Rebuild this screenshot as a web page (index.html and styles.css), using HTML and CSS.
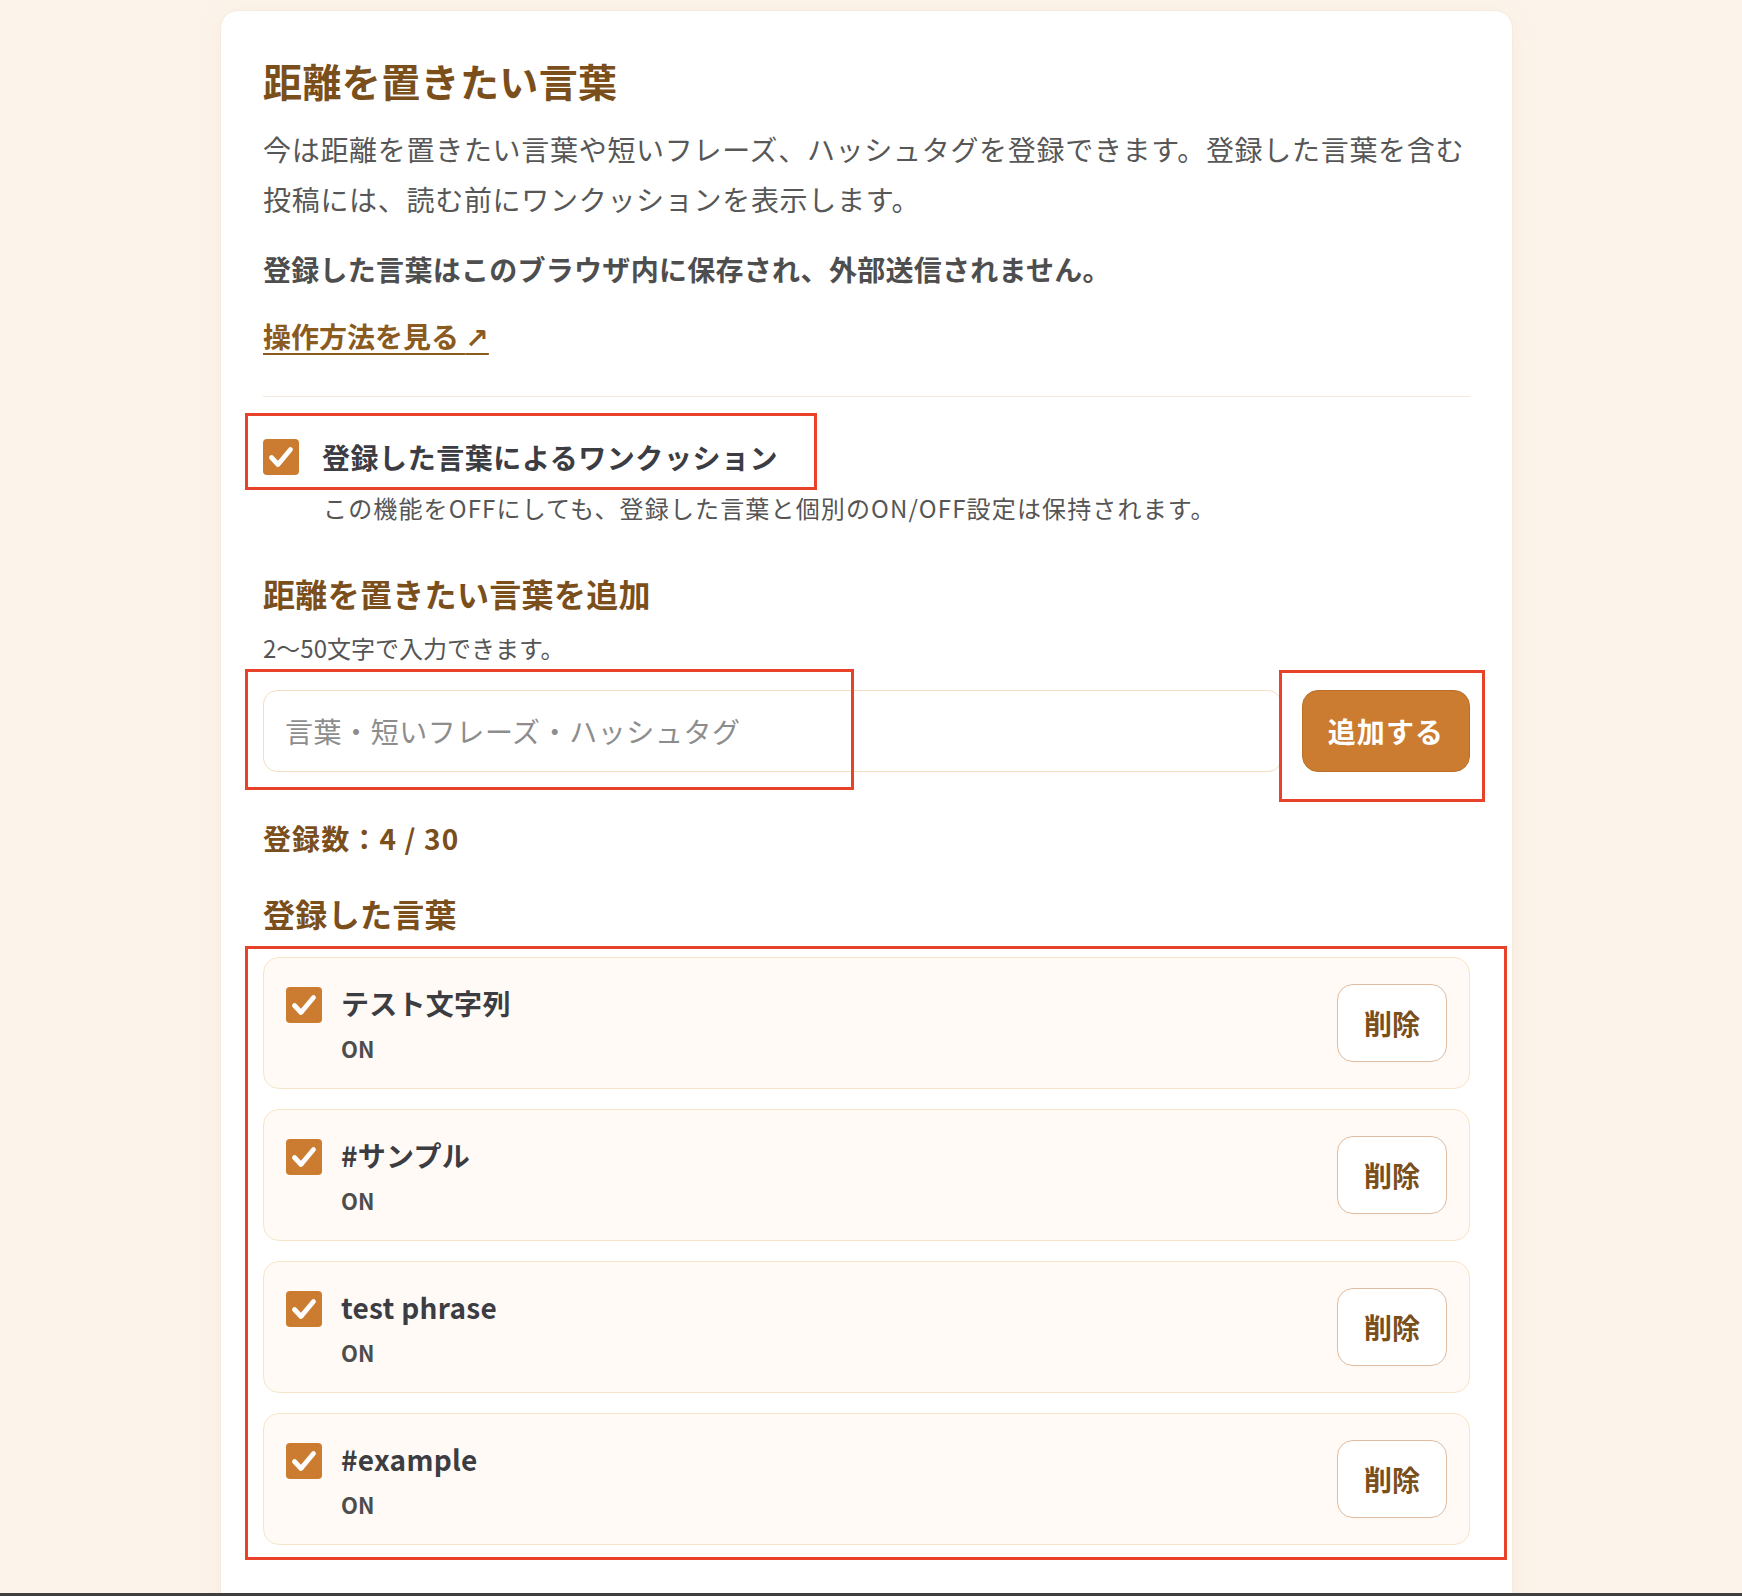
FILE: index.html
```html
<!DOCTYPE html>
<html lang="ja">
<head>
<meta charset="utf-8">
<title>距離を置きたい言葉</title>
<link rel="stylesheet" href="styles.css">
</head>
<body>
<main class="card">
  <h1 class="title">距離を置きたい言葉</h1>
  <p class="desc">今は距離を置きたい言葉や短いフレーズ、ハッシュタグを登録できます。登録した言葉を含む投稿には、読む前にワンクッションを表示します。</p>
  <p class="note">登録した言葉はこのブラウザ内に保存され、外部送信されません。</p>
  <p class="howto"><a class="link" href="#">操作方法を見る <span class="arrow">↗</span></a></p>
  <div class="divider"></div>

  <label class="toggle">
    <span class="check big"><svg viewBox="0 0 36 36"><path d="M8.5 18.5 L15 25.5 L27.5 10.5"/></svg></span>
    <span class="toggle-label">登録した言葉によるワンクッション</span>
  </label>
  <p class="toggle-sub">この機能をOFFにしても、登録した言葉と個別のON/OFF設定は保持されます。</p>

  <h2 class="section">距離を置きたい言葉を追加</h2>
  <p class="hint">2〜50文字で入力できます。</p>
  <div class="add-row">
    <input class="word-input" type="text" placeholder="言葉・短いフレーズ・ハッシュタグ">
    <button class="add-btn" type="button">追加する</button>
  </div>

  <p class="count">登録数：4 / 30</p>

  <h2 class="section list-title">登録した言葉</h2>
  <ul class="words">
    <li class="word">
      <div class="word-main">
        <span class="check"><svg viewBox="0 0 36 36"><path d="M8.5 18.5 L15 25.5 L27.5 10.5"/></svg></span>
        <div class="word-text">
          <span class="word-name">テスト文字列</span>
          <span class="word-state">ON</span>
        </div>
      </div>
      <button class="del-btn" type="button">削除</button>
    </li>
    <li class="word">
      <div class="word-main">
        <span class="check"><svg viewBox="0 0 36 36"><path d="M8.5 18.5 L15 25.5 L27.5 10.5"/></svg></span>
        <div class="word-text">
          <span class="word-name">#サンプル</span>
          <span class="word-state">ON</span>
        </div>
      </div>
      <button class="del-btn" type="button">削除</button>
    </li>
    <li class="word">
      <div class="word-main">
        <span class="check"><svg viewBox="0 0 36 36"><path d="M8.5 18.5 L15 25.5 L27.5 10.5"/></svg></span>
        <div class="word-text">
          <span class="word-name">test phrase</span>
          <span class="word-state">ON</span>
        </div>
      </div>
      <button class="del-btn" type="button">削除</button>
    </li>
    <li class="word">
      <div class="word-main">
        <span class="check"><svg viewBox="0 0 36 36"><path d="M8.5 18.5 L15 25.5 L27.5 10.5"/></svg></span>
        <div class="word-text">
          <span class="word-name">#example</span>
          <span class="word-state">ON</span>
        </div>
      </div>
      <button class="del-btn" type="button">削除</button>
    </li>
  </ul>
</main>

<div class="mark mark-toggle"></div>
<div class="mark mark-input"></div>
<div class="mark mark-button"></div>
<div class="mark mark-list"></div>
<div class="window-edge"></div>
</body>
</html>
```

FILE: styles.css
```css
* { box-sizing: border-box; }

html, body {
  margin: 0;
  padding: 0;
}

body {
  background: #fcf4eb;
  font-family: "Noto Sans CJK JP", "Noto Sans", sans-serif;
  color: #555555;
  padding: 10px 9px 0 0;
  overflow: hidden;
  height: 1596px;
}

.card {
  width: 1293px;
  margin: 0 auto;
  background: #ffffff;
  border: 1px solid #f5eadc;
  border-radius: 18px;
  box-shadow: 0 4px 26px rgba(190, 130, 70, 0.08);
  padding: 43px 42px 80px 42px;
}

.title {
  margin: 0;
  font-size: 39px;
  line-height: 52px;
  font-weight: 700;
  color: #7a4f1c;
  letter-spacing: 0.01em;
}

.desc {
  margin: 18px 0 0;
  font-size: 28px;
  line-height: 50px;
  color: #575757;
  letter-spacing: 0.025em;
}

.note {
  margin: 20px 0 0;
  font-size: 28px;
  line-height: 50px;
  font-weight: 700;
  color: #4e4e4e;
  letter-spacing: 0.01em;
}

.howto {
  margin: 17px 0 0;
  font-size: 28px;
  line-height: 50px;
  height: 50px;
}

.link {
  color: #8a5a1f;
  font-weight: 700;
  text-decoration: underline;
  text-decoration-thickness: 2px;
  text-underline-offset: 5px;
}

.arrow {
  font-family: "DejaVu Sans", sans-serif;
  font-size: 28px;
  line-height: 1;
  font-weight: 700;
}

.divider {
  margin-top: 35px;
  border-top: 1px solid #f4e9dc;
}

.toggle {
  margin-top: 38px;
  display: flex;
  align-items: center;
  gap: 23px;
  height: 44px;
}

.check {
  width: 36px;
  height: 36px;
  flex: 0 0 36px;
  border-radius: 4px;
  background: #cb7c30;
  display: block;
}

.check svg {
  width: 36px;
  height: 36px;
  display: block;
}

.check path {
  fill: none;
  stroke: #ffffff;
  stroke-width: 4.8;
  stroke-linecap: round;
  stroke-linejoin: round;
}

.toggle-label {
  font-size: 28px;
  line-height: 44px;
  font-weight: 700;
  color: #3c3c43;
  letter-spacing: 0.02em;
}

.toggle-sub {
  margin: 12px 0 0 60px;
  font-size: 24px;
  line-height: 34px;
  color: #555555;
  letter-spacing: 1.15px;
}

.section {
  margin: 46px 0 0;
  font-size: 32px;
  line-height: 44px;
  font-weight: 700;
  color: #7a4f1c;
  letter-spacing: 0.01em;
}

.hint {
  margin: 16px 0 0;
  font-size: 24px;
  line-height: 34px;
  color: #555555;
}

.add-row {
  margin-top: 25px;
  display: flex;
  gap: 20px;
  height: 82px;
}

.word-input {
  flex: 1;
  height: 82px;
  border: 1px solid #f3dfbf;
  border-radius: 14px;
  padding: 0 21px;
  font-family: "Noto Sans CJK JP", "Noto Sans", sans-serif;
  font-size: 28px;
  color: #444444;
  background: #ffffff;
  outline: none;
  letter-spacing: 0.02em;
}

.word-input::placeholder {
  color: #8d8d8d;
}

.add-btn {
  width: 168px;
  height: 82px;
  border: 1px solid #bb7029;
  border-radius: 16px;
  background: #cb7c30;
  color: #ffffff;
  font-family: "Noto Sans CJK JP", "Noto Sans", sans-serif;
  font-size: 28px;
  font-weight: 700;
  letter-spacing: 0.04em;
  padding: 0;
}

.count {
  margin: 46px 0 0;
  font-size: 28px;
  line-height: 40px;
  font-weight: 700;
  color: #7a4f1c;
  letter-spacing: 0.04em;
}

.list-title {
  margin-top: 33px;
}

.words {
  list-style: none;
  margin: 22px 0 0;
  padding: 0;
  display: flex;
  flex-direction: column;
  gap: 20px;
}

.word {
  display: flex;
  align-items: center;
  justify-content: space-between;
  height: 132px;
  padding: 25px 22px;
  background: #fffaf5;
  border: 1px solid #f8e5c9;
  border-radius: 16px;
}

.word-main {
  display: flex;
  align-items: flex-start;
  gap: 19px;
}

.word-main .check {
  margin-top: 4px;
}

.word-text {
  display: flex;
  flex-direction: column;
}

.word-name {
  font-size: 28px;
  line-height: 40px;
  font-weight: 700;
  color: #3c3c43;
  letter-spacing: 0.01em;
}

.word-state {
  margin-top: 10px;
  font-size: 22px;
  line-height: 30px;
  font-weight: 700;
  color: #4d4d4d;
}

.del-btn {
  width: 110px;
  height: 78px;
  border: 1px solid #dfbba0;
  border-radius: 16px;
  background: #ffffff;
  color: #7a4f1c;
  font-family: "Noto Sans CJK JP", "Noto Sans", sans-serif;
  font-size: 28px;
  font-weight: 700;
  padding: 0;
}

/* annotation rectangles drawn over the screenshot */
.mark {
  position: absolute;
  border: 3px solid #e8432a;
  pointer-events: none;
}

.mark-toggle { left: 245px; top: 413px; width: 572px; height: 77px; }
.mark-input { left: 245px; top: 669px; width: 609px; height: 121px; }
.mark-button { left: 1279px; top: 670px; width: 206px; height: 132px; }
.mark-list { left: 245px; top: 946px; width: 1262px; height: 614px; }

.window-edge {
  position: fixed;
  left: 0;
  right: 0;
  bottom: 0;
  height: 3px;
  background: #3f3f3f;
}
```
